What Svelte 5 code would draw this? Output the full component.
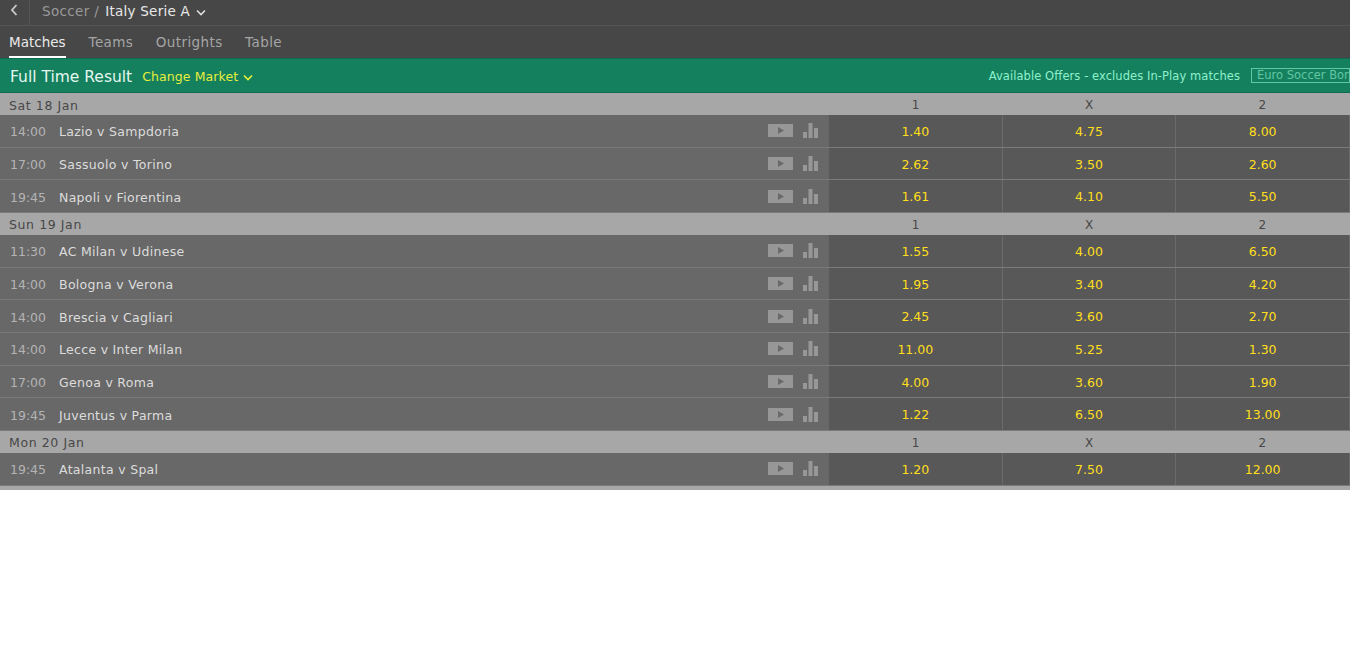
<script>
  const groups = [
    { date: 'Sat 18 Jan', rows: [
      ['14:00','Lazio v Sampdoria','1.40','4.75','8.00'],
      ['17:00','Sassuolo v Torino','2.62','3.50','2.60'],
      ['19:45','Napoli v Fiorentina','1.61','4.10','5.50'] ] },
    { date: 'Sun 19 Jan', rows: [
      ['11:30','AC Milan v Udinese','1.55','4.00','6.50'],
      ['14:00','Bologna v Verona','1.95','3.40','4.20'],
      ['14:00','Brescia v Cagliari','2.45','3.60','2.70'],
      ['14:00','Lecce v Inter Milan','11.00','5.25','1.30'],
      ['17:00','Genoa v Roma','4.00','3.60','1.90'],
      ['19:45','Juventus v Parma','1.22','6.50','13.00'] ] },
    { date: 'Mon 20 Jan', rows: [
      ['19:45','Atalanta v Spal','1.20','7.50','12.00'] ] }
  ];
</script>

<div class="page">
  <div class="crumbs">
    <div class="back">
      <svg width="8" height="12" viewBox="0 0 8 12"><path d="M6.5 1 L2 6 L6.5 11" fill="none" stroke="#ccc" stroke-width="1.8"/></svg>
    </div>
    <span class="soccer">Soccer /</span>
    <span class="league">Italy Serie A</span>
    <svg class="chev" width="10" height="7" viewBox="0 0 10 7"><path d="M1 1.5 L5 5.5 L9 1.5" fill="none" stroke="#ddd" stroke-width="1.6"/></svg>
  </div>
  <div class="tabs">
    <span class="tab active">Matches</span>
    <span class="tab">Teams</span>
    <span class="tab">Outrights</span>
    <span class="tab">Table</span>
  </div>
  <div class="market">
    <span class="title">Full Time Result</span>
    <span class="change">Change Market</span>
    <svg class="chev2" width="10" height="7" viewBox="0 0 10 7"><path d="M1 1.5 L5 5.5 L9 1.5" fill="none" stroke="#e6ee3c" stroke-width="1.6"/></svg>
    <span class="offers">Available Offers - excludes In-Play matches</span>
    <span class="promo">Euro Soccer Bonus</span>
  </div>
  {#each groups as g}
    <div class="head">
      <span class="date">{g.date}</span>
      <span class="hc">1</span><span class="hc">X</span><span class="hc">2</span>
    </div>
    {#each g.rows as r}
      <div class="row">
        <div class="info">
          <span class="time">{r[0]}</span>
          <span class="name">{r[1]}</span>
          <svg class="video" width="25" height="13" viewBox="0 0 25 13"><rect width="25" height="13" fill="#979797"/><path d="M10 3 L16 6.5 L10 10 Z" fill="#6a6a6a"/></svg>
          <svg class="stats" width="15" height="15" viewBox="0 0 15 15"><rect x="0" y="9" width="4" height="6" fill="#979797"/><rect x="5.5" y="0" width="4" height="15" fill="#979797"/><rect x="11" y="5" width="4" height="10" fill="#979797"/></svg>
        </div>
        <span class="odd">{r[2]}</span><span class="odd">{r[3]}</span><span class="odd">{r[4]}</span>
      </div>
    {/each}
  {/each}
  <div class="foot"></div>
</div>

<style>
  :global(body) { margin: 0; background: #fff; }
  .page { font-family: "DejaVu Sans", Verdana, sans-serif; font-size: 12px; width: 1350px; overflow: hidden; }
  .crumbs { height: 25px; background: #474747; border-bottom: 1px solid #545454; display: flex; align-items: center; font-size: 13.5px; }
  .back { width: 30px; height: 25px; box-sizing: border-box; border-right: 1px solid #545454; display: flex; align-items: center; padding: 0 0 5px 10px; margin-right: 12px; }
  .soccer { color: #999; margin-right: 6px; padding-bottom: 3px; letter-spacing: .35px; }
  .league { color: #e8e8e8; padding-bottom: 3px; letter-spacing: .25px; }
  .chev { margin: 0 0 1px 6px; }
  .tabs { height: 32px; box-sizing: border-box; background: #474747; display: flex; gap: 22.5px; padding-left: 9px; font-size: 13.5px; }
  .tab { color: #a5a5a5; height: 32px; box-sizing: border-box; padding-top: 8px; letter-spacing: .4px; }
  .active { color: #eaeaea; border-bottom: 2px solid #fff; letter-spacing: 0; margin-right: .5px; }
  .market { height: 35px; box-sizing: border-box; background: #14805e; border-top: 1px solid #0f6a4e; border-bottom: 1px solid #0f6a4e; display: flex; align-items: center; padding-left: 10px; }
  .title { color: #e4f7ef; font-size: 15.5px; margin-right: 10px; padding-top: 2px; }
  .change { color: #e6ee3c; font-size: 12.5px; letter-spacing: .1px; padding-top: 2px; }
  .chev2 { margin: 4px 0 0 5px; }
  .offers { color: #8ff0cc; font-size: 11.5px; letter-spacing: .07px; margin-left: auto; margin-right: 11px; }
  .promo { color: #62c7a3; font-size: 11.5px; border: 1px solid #62c7a3; height: 15px; line-height: 13px; padding-left: 5px; width: 99px; flex: none; white-space: nowrap; overflow: hidden; margin-bottom: 1px; box-sizing: border-box; }
  .head { height: 22px; box-sizing: border-box; padding-top: 2px; background: #a7a7a7; display: flex; align-items: center; color: #474747; }
  .date { width: 821px; padding-left: 9px; font-size: 12.5px; margin-right: -1px; letter-spacing: .6px; }
  .hc { width: 173.33px; text-align: center; }
  .row { height: 32.667px; box-sizing: border-box; background: #686868; border-bottom: 1px solid #7b7b7b; display: flex; }
  .info { width: 829px; flex: none; display: flex; align-items: center; box-sizing: border-box; padding-left: 10px; }
  .time { color: #b4b4b4; width: 49px; font-size: 12.5px; padding-top: 2px; }
  .name { color: #dcdcdc; font-size: 12.5px; letter-spacing: .3px; padding-top: 2px; }
  .video { margin-left: auto; }
  .stats { margin: 0 11px 0 10px; }
  .odd { width: 173.67px; background: #585858; color: #ffdf1b; text-align: center; font-size: 12.5px; line-height: 34px; box-sizing: border-box; border-right: 1px solid #6a6a6a; }
  .foot { height: 4px; background: #a7a7a7; }
</style>
